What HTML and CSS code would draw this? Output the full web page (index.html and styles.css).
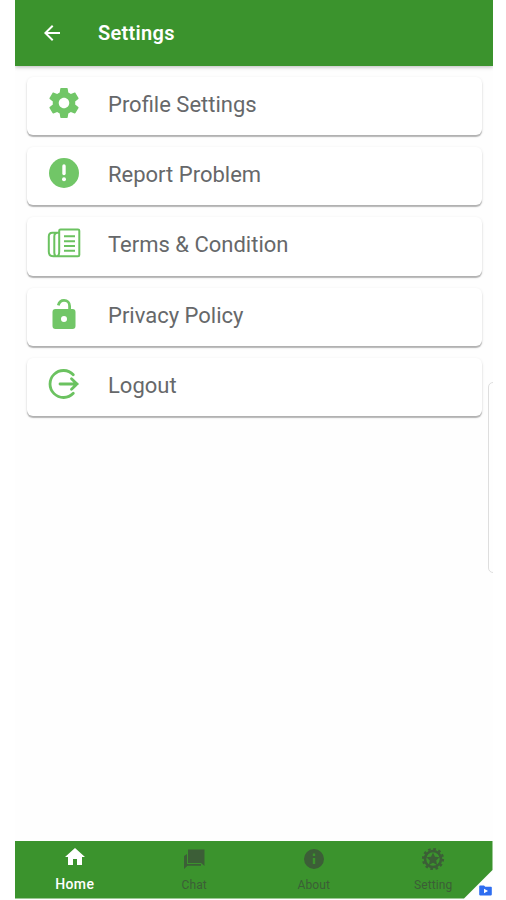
FILE: index.html
```html
<!DOCTYPE html>
<html lang="en">
<head>
<meta charset="utf-8">
<title>Settings</title>
<link rel="stylesheet" href="styles.css">
</head>
<body>
<div class="phone">
  <header class="topbar">
    <svg class="back" viewBox="0 0 24 24"><path fill="#fff" d="M20 11H7.83l5.59-5.59L12 4l-8 8 8 8 1.41-1.41L7.83 13H20z"/></svg>
    <h1>Settings</h1>
  </header>
  <main class="list">
    <a class="card">
      <svg class="icon" viewBox="0 0 24 24"><path fill="currentColor" d="M19.43 12.98c.04-.32.07-.64.07-.98s-.03-.66-.07-.98l2.11-1.65c.19-.15.24-.42.12-.64l-2-3.46c-.12-.22-.39-.3-.61-.22l-2.49 1c-.52-.4-1.08-.73-1.69-.98l-.38-2.65A.488.488 0 0 0 14 2h-4c-.25 0-.46.18-.49.42l-.38 2.65c-.61.25-1.17.59-1.69.98l-2.49-1c-.23-.09-.49 0-.61.22l-2 3.46c-.13.22-.07.49.12.64l2.11 1.65c-.04.32-.07.65-.07.98s.03.66.07.98l-2.11 1.65c-.19.15-.24.42-.12.64l2 3.46c.12.22.39.3.61.22l2.49-1c.52.4 1.08.73 1.69.98l.38 2.65c.03.24.24.42.49.42h4c.25 0 .46-.18.49-.42l.38-2.65c.61-.25 1.17-.59 1.69-.98l2.49 1c.23.09.49 0 .61-.22l2-3.46c.12-.22.07-.49-.12-.64l-2.11-1.65zM12 15.500c-1.930 0-3.500-1.570-3.500-3.500s1.570-3.500 3.500-3.500 3.500 1.570 3.500 3.500-1.570 3.500-3.500 3.500z"/></svg>
      <span>Profile Settings</span>
    </a>
    <a class="card">
      <svg class="icon" viewBox="0 0 36 36"><circle cx="18" cy="18" r="15" fill="currentColor"/><path d="M18 11v7.500" stroke="#fff" stroke-width="3.400" stroke-linecap="round"/><circle cx="18" cy="24.300" r="2" fill="#fff"/></svg>
      <span>Report Problem</span>
    </a>
    <a class="card">
      <svg class="icon line" viewBox="0 0 36 36"><path d="M14.500 4.500H32a1.300 1.300 0 0 1 1.300 1.300V30A1.300 1.300 0 0 1 32 31.300H7.500c-3 0-4.700-1.800-4.700-4.600V11.500c0-2.500 1.200-3.800 3.500-3.800h6.900M13.200 5.800v21c0 2.600-.9 4.400-2.500 4.400-1.500 0-2.400-1.400-2.400-3.400V11.500c0-2.400 1-3.800 3.200-3.800M13.200 5.800a1.300 1.300 0 0 1 1.300-1.300"/><path d="M18 11.300h11M18 16.200h11M18 21h11M18 25.700h11"/></svg>
      <span>Terms &amp; Condition</span>
    </a>
    <a class="card">
      <svg class="icon" viewBox="0 0 36 36"><path d="M12.300 9.300c.8-3 2.900-4.900 5.700-4.900 3.300 0 5.600 2.400 5.600 5.600v4" fill="none" stroke="currentColor" stroke-width="2.800"/><path fill="currentColor" fill-rule="evenodd" d="M9.500 13h17a3 3 0 0 1 3 3v14a3 3 0 0 1-3 3h-17a3 3 0 0 1-3-3V16a3 3 0 0 1 3-3zM18 20a3 3 0 1 0 0 6 3 3 0 0 0 0-6z"/></svg>
      <span>Privacy Policy</span>
    </a>
    <a class="card">
      <svg class="icon exit" viewBox="0 0 36 36"><path d="M27.300 8.700A13.500 13.500 0 1 0 27.300 27.300M14 18h17M25.500 12.800l5.500 5.200-5.500 5.200"/></svg>
      <span>Logout</span>
    </a>
  </main>
  <div class="edge-panel"></div>
  <nav class="tabs">
    <a class="tab active">
      <svg viewBox="0 0 24 24"><path fill="currentColor" d="M10 20v-6h4v6h5v-8h3L12 3 2 12h3v8z"/></svg>
      <span>Home</span>
    </a>
    <a class="tab">
      <svg viewBox="0 0 24 24"><path fill="currentColor" d="M6 2.500h16.500V19l-3.500-3H6zM5 7v10h14v1.800H5.500L2 22V9z"/></svg>
      <span>Chat</span>
    </a>
    <a class="tab">
      <svg viewBox="0 0 24 24"><path fill="currentColor" d="M12 2a10 10 0 1 0 0 20 10 10 0 0 0 0-20zm1.200 15h-2.400v-6h2.400zm0-8h-2.400V6.600h2.400z"/></svg>
      <span>About</span>
    </a>
    <a class="tab">
      <svg viewBox="0 0 24 24"><circle cx="12" cy="12" r="10" fill="none" stroke="currentColor" stroke-width="2.200" stroke-dasharray="2.618 2.618"/><circle cx="12" cy="12" r="8" fill="none" stroke="currentColor" stroke-width="2.600"/><path fill="currentColor" d="M12 5.500l2 4.200 4.600.6-3.400 3.200.9 4.500-4.100-2.200L7.900 18l.9-4.500-3.400-3.200 4.600-.6z"/></svg>
      <span>Setting</span>
    </a>
  </nav>
  <svg class="badge" viewBox="0 0 13 11"><path fill="#2e6df0" d="M1 .5h4l1.300 1.300H12a.8.800 0 0 1 .8.800v7a.8.800 0 0 1-.8.800H1a.8.800 0 0 1-.8-.8V1.300A.8.800 0 0 1 1 .5z"/><path fill="#fff" d="M5 3.700L9 6 5 8.300z"/></svg>
</div>
</body>
</html>
```
FILE: styles.css
```css
* { box-sizing: border-box; }
body {
  margin: 0;
  background: #fff;
  font-family: Roboto, "Liberation Sans", sans-serif;
}
.phone {
  position: relative;
  display: flex;
  flex-direction: column;
  width: 478px;
  height: 898.5px;
  margin-left: 14.5px;
  background: #fefefe;
  overflow: hidden;
}
.topbar {
  display: flex;
  align-items: center;
  flex: none;
  height: 65.5px;
  padding-left: 25px;
  background: #3b932d;
  box-shadow: 0 1px 4px rgba(0, 0, 0, .28);
}
.back { width: 24px; height: 24px; }
h1 {
  margin: 0 0 0 34.5px;
  color: #fff;
  font-size: 20px;
  font-weight: 600;
  letter-spacing: .3px;
  line-height: 24px;
}
.list {
  display: flex;
  flex-direction: column;
  flex: 1;
  gap: 12px;
  padding: 11.5px 10.5px 0 12px;
}
.card {
  display: flex;
  align-items: center;
  height: 58.2px;
  padding: 0 0 6px 19.5px;
  border-radius: 6px;
  background: #fff;
  color: #66686a;
  font-size: 22px;
  box-shadow: 0 2px 1px rgba(0, 0, 0, .24), 0 1px 3px rgba(0, 0, 0, .13);
}
.card span { margin: 3px 0 0 26px; }
.icon {
  width: 36px;
  height: 36px;
  color: #71c667;
}
.line, .exit {
  fill: none;
  stroke: #6bc260;
  stroke-width: 2;
}
.exit {
  stroke-width: 2.8;
  stroke-linecap: round;
}
.edge-panel {
  position: absolute;
  top: 382px;
  right: -5px;
  width: 10px;
  height: 191px;
  border: 1.5px solid #dedede;
  border-radius: 6px;
}
.tabs {
  display: grid;
  grid-template-columns: repeat(4, 1fr);
  flex: none;
  height: 57.5px;
  background: #3b932d;
  clip-path: polygon(0 0, 100% 0, 100% 29px, calc(100% - 28.5px) 100%, 0 100%);
}
.tab {
  display: flex;
  flex-direction: column;
  align-items: center;
  padding: 6px 0 0 1px;
  color: #3c5e37;
  font-size: 12px;
  letter-spacing: .1px;
  line-height: 16px;
}
.tab svg {
  width: 24px;
  height: 24px;
}
.tab span { margin-top: 6px; }
.tab.active {
  padding-top: 4px;
  color: #fff;
  font-size: 14px;
  font-weight: 500;
  letter-spacing: .4px;
}
.tab.active span { margin-top: 7px; }
.badge {
  position: absolute;
  right: 1px;
  bottom: 3px;
  width: 13px;
  height: 11px;
}
```
